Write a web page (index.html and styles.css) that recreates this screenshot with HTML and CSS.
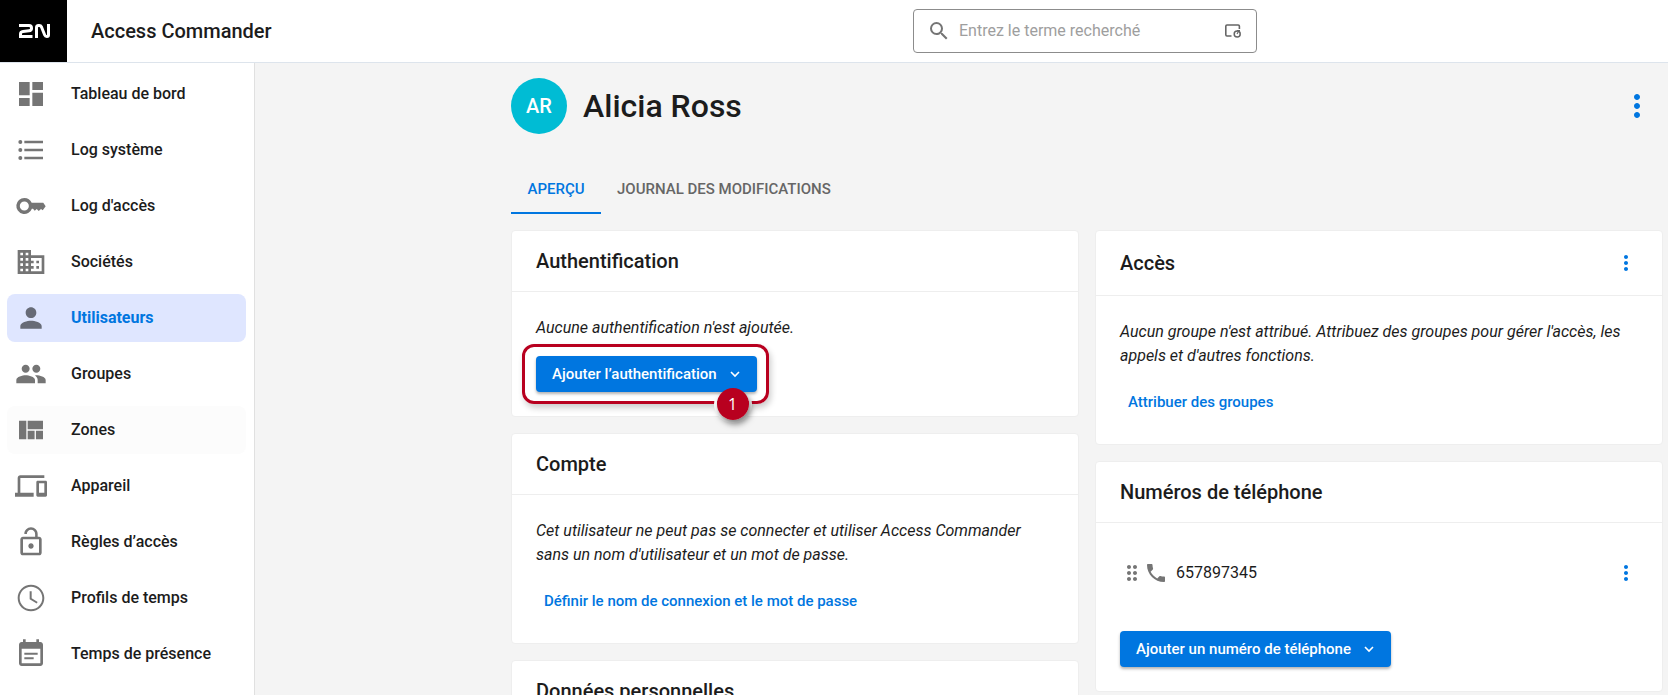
FILE: index.html
```
<!DOCTYPE html>
<html lang="fr">
<head>
    <meta charset="UTF-8">
    <meta name="viewport" content="width=device-width, initial-scale=1.0">
    <title>Access Commander</title>
    <link rel="stylesheet" href="styles.css">
</head>
<body>
    <header class="topbar">
        <a class="logo" href="#" aria-label="2N">
            <svg viewBox="0 0 32 14" width="32" height="14" fill="none" stroke="#fff" stroke-width="3">
                <path d="M1 1.500h10q2.500 0 2.500 2.500v0.500q0 2-2.500 2.300l-6 0.600q-2.500 0.300-2.500 2.500v2.600h12"/>
                <path d="M18.500 14V3.500q0-2 2-2h0.800q1.500 0 2.200 1.500l3.200 8q0.600 1.500 2 1.500h0.300q1.500 0 1.500-1.500V0"/>
            </svg>
        </a>
        <span class="app-name">Access Commander</span>
        <div class="search">
            <svg class="icon" viewBox="0 0 24 24" width="24" height="24"><path d="M15.500 14h-.79l-.28-.27A6.471 6.471 0 0 0 16 9.500 6.500 6.500 0 1 0 9.500 16c1.610 0 3.090-.59 4.230-1.570l.27.28v.79l5 4.990L20.490 19l-4.990-5zm-6 0C7.010 14 5 11.990 5 9.500S7.010 5 9.500 5 14 7.010 14 9.500 11.990 14 9.500 14z"/></svg>
            <input type="search" placeholder="Entrez le terme recherché" aria-label="Recherche">
            <svg viewBox="0 0 18 16" width="18" height="16" fill="none" stroke="#666" stroke-width="1.600">
                <path d="M7.500 13H3Q1.800 13 1.800 11.800V3.200Q1.800 2 3 2H14.200Q15.400 2 15.400 3.200V6"/>
                <circle cx="13.200" cy="11" r="3" stroke-width="1.500"/>
                <path d="M13 11L14.500 8.500M13 7.500h3" stroke-width="1.200"/>
            </svg>
        </div>
    </header>

    <div class="layout">
        <nav class="sidebar">
            <a class="nav-item" href="#">
                <svg class="icon" viewBox="0 0 24 24"><path d="M3 13h8V3H3v10zm0 8h8v-6H3v6zm10 0h8V11h-8v10zm0-18v6h8V3h-8z"/></svg>
                Tableau de bord
            </a>
            <a class="nav-item" href="#">
                <svg class="icon" viewBox="0 0 24 24"><path d="M7 5h14v2H7V5m0 8v-2h14v2H7M4 4.500A1.500 1.500 0 0 1 5.500 6 1.500 1.500 0 0 1 4 7.500 1.500 1.500 0 0 1 2.500 6 1.500 1.500 0 0 1 4 4.500m0 6A1.500 1.500 0 0 1 5.500 12 1.500 1.500 0 0 1 4 13.500 1.500 1.500 0 0 1 2.500 12 1.500 1.500 0 0 1 4 10.500M7 19v-2h14v2H7m-3-2.500A1.500 1.500 0 0 1 5.500 18 1.500 1.500 0 0 1 4 19.500 1.500 1.500 0 0 1 2.500 18 1.500 1.500 0 0 1 4 16.500z"/></svg>
                Log système
            </a>
            <a class="nav-item" href="#">
                <svg class="icon" viewBox="0 0 24 24"><path fill-rule="evenodd" d="M7 6a6 6 0 1 0 5.650 8H13.500l1.300 1.600 1.500-1.400 1.500 1.600 1.700-1.600 1.300 1L23 12.200 21.200 9.600H12.500A6 6 0 0 0 7 6zm0 2.600a3.400 3.400 0 1 1 0 6.800 3.400 3.400 0 0 1 0-6.800z"/></svg>
                Log d'accès
            </a>
            <a class="nav-item" href="#">
                <svg class="icon" viewBox="0 0 24 24"><path d="M12 7V3H2v18h20V7H12zM6 19H4v-2h2v2zm0-4H4v-2h2v2zm0-4H4V9h2v2zm0-4H4V5h2v2zm4 12H8v-2h2v2zm0-4H8v-2h2v2zm0-4H8V9h2v2zm0-4H8V5h2v2zm10 12h-8v-2h2v-2h-2v-2h2v-2h-2V9h8v10zm-2-8h-2v2h2v-2zm0 4h-2v2h2v-2z"/></svg>
                Sociétés
            </a>
            <a class="nav-item active" href="#">
                <svg class="icon" viewBox="0 0 24 24"><path d="M12 12c2.210 0 4-1.790 4-4s-1.790-4-4-4-4 1.790-4 4 1.790 4 4 4zm0 2c-2.670 0-8 1.340-8 4v2h16v-2c0-2.660-5.330-4-8-4z"/></svg>
                Utilisateurs
            </a>
            <a class="nav-item" href="#">
                <svg class="icon" viewBox="0 0 24 24"><path d="M16 11c1.660 0 2.990-1.340 2.990-3S17.660 5 16 5s-3 1.340-3 3 1.340 3 3 3zm-8 0c1.660 0 2.990-1.340 2.990-3S9.660 5 8 5 5 6.340 5 8s1.340 3 3 3zm0 2c-2.330 0-7 1.170-7 3.500V19h14v-2.500c0-2.330-4.670-3.500-7-3.500zm8 0c-.29 0-.62.020-.97.050 1.160.84 1.970 1.970 1.970 3.450V19h6v-2.500c0-2.330-4.670-3.500-7-3.500z"/></svg>
                Groupes
            </a>
            <a class="nav-item hover" href="#">
                <svg class="icon" viewBox="0 0 24 24"><path d="M3 5h5.500v14H3zM9.500 5H21v6.500H9.500zM9.500 12.500h5.200V19H9.500zM15.700 12.500H21V19h-5.300z"/></svg>
                Zones
            </a>
            <a class="nav-item" href="#">
                <svg class="icon" viewBox="0 0 24 24"><path d="M4 6h18V4H4c-1.100 0-2 .9-2 2v11H0v3h14v-3H4V6zm19 2h-6c-.55 0-1 .45-1 1v10c0 .55.45 1 1 1h6c.55 0 1-.45 1-1V9c0-.55-.45-1-1-1zm-1 9h-4v-7h4v7z"/></svg>
                Appareil
            </a>
            <a class="nav-item" href="#">
                <svg class="icon" viewBox="0 0 24 24"><path d="M12 17c1.100 0 2-.9 2-2s-.9-2-2-2-2 .9-2 2 .9 2 2 2zm6-9h-1V6c0-2.760-2.240-5-5-5S7 3.240 7 6h1.900c0-1.710 1.390-3.100 3.100-3.100s3.100 1.390 3.100 3.100v2H6c-1.100 0-2 .9-2 2v10c0 1.100.9 2 2 2h12c1.100 0 2-.9 2-2V10c0-1.100-.9-2-2-2zm0 12H6V10h12v10z"/></svg>
                Règles d’accès
            </a>
            <a class="nav-item" href="#">
                <svg class="icon" viewBox="0 0 24 24"><path d="M11.990 2C6.470 2 2 6.480 2 12s4.470 10 9.990 10C17.520 22 22 17.520 22 12S17.520 2 11.990 2zM12 20.500c-4.700 0-8.500-3.800-8.500-8.500S7.300 3.500 12 3.500s8.500 3.800 8.500 8.500-3.800 8.500-8.500 8.500zM12.500 7H11v6l5.250 3.150.75-1.230-4.500-2.670z"/></svg>
                Profils de temps
            </a>
            <a class="nav-item" href="#">
                <svg class="icon" viewBox="0 0 24 24"><path d="M17 11H7v1.600h10V11zm2-8h-1V1h-2v2H8V1H6v2H5c-1.110 0-1.990.9-1.990 2L3 19c0 1.100.89 2 2 2h14c1.100 0 2-.9 2-2V5c0-1.100-.9-2-2-2zm0 16H5V8h14v11zm-5-4.600H7V16h7v-1.600z"/></svg>
                Temps de présence
            </a>
        </nav>

        <main class="content">
            <div class="profile">
                <span class="avatar">AR</span>
                <h1>Alicia Ross</h1>
                <button class="icon-btn large" aria-label="Plus d'actions">
                    <svg viewBox="0 0 24 24" width="36" height="36"><path d="M12 8c1.100 0 2-.9 2-2s-.9-2-2-2-2 .9-2 2 .9 2 2 2zm0 2c-1.100 0-2 .9-2 2s.9 2 2 2 2-.9 2-2-.9-2-2-2zm0 6c-1.100 0-2 .9-2 2s.9 2 2 2 2-.9 2-2-.9-2-2-2z"/></svg>
                </button>
            </div>

            <div class="tabs">
                <button class="tab selected">APERÇU</button>
                <button class="tab">JOURNAL DES MODIFICATIONS</button>
            </div>

            <div class="columns">
                <div class="column">
                    <section class="card">
                        <div class="card-header"><h2>Authentification</h2></div>
                        <div class="card-body">
                            <p class="empty">Aucune authentification n'est ajoutée.</p>
                            <div class="callout">
                                <button class="btn">
                                    Ajouter l’authentification
                                    <svg class="chevron" viewBox="0 0 20 20"><path d="M6 8l4 4 4-4"/></svg>
                                </button>
                                <span class="callout-frame"></span>
                                <span class="callout-number">1</span>
                            </div>
                        </div>
                    </section>

                    <section class="card">
                        <div class="card-header"><h2>Compte</h2></div>
                        <div class="card-body">
                            <p class="empty">Cet utilisateur ne peut pas se connecter et utiliser Access Commander sans un nom d'utilisateur et un mot de passe.</p>
                            <button class="btn-text">Définir le nom de connexion et le mot de passe</button>
                        </div>
                    </section>

                    <section class="card">
                        <div class="card-header"><h2>Données personnelles</h2></div>
                    </section>
                </div>

                <div class="column">
                    <section class="card">
                        <div class="card-header with-menu">
                            <h2>Accès</h2>
                            <button class="icon-btn" aria-label="Menu Accès">
                                <svg viewBox="0 0 24 24" width="24" height="24"><path d="M12 8c1.100 0 2-.9 2-2s-.9-2-2-2-2 .9-2 2 .9 2 2 2zm0 2c-1.100 0-2 .9-2 2s.9 2 2 2 2-.9 2-2-.9-2-2-2zm0 6c-1.100 0-2 .9-2 2s.9 2 2 2 2-.9 2-2-.9-2-2-2z"/></svg>
                            </button>
                        </div>
                        <div class="card-body">
                            <p class="empty">Aucun groupe n'est attribué. Attribuez des groupes pour gérer l'accès, les appels et d'autres fonctions.</p>
                            <button class="btn-text">Attribuer des groupes</button>
                        </div>
                    </section>

                    <section class="card">
                        <div class="card-header"><h2>Numéros de téléphone</h2></div>
                        <div class="card-body phones">
                            <div class="phone-row">
                                <svg class="icon" viewBox="0 0 24 24" width="24" height="24"><path d="M11 18c0 1.100-.9 2-2 2s-2-.9-2-2 .9-2 2-2 2 .9 2 2zm-2-8c-1.100 0-2 .9-2 2s.9 2 2 2 2-.9 2-2-.9-2-2-2zm0-6c-1.100 0-2 .9-2 2s.9 2 2 2 2-.9 2-2-.9-2-2-2zm6 4c1.100 0 2-.9 2-2s-.9-2-2-2-2 .9-2 2 .9 2 2 2zm0 2c-1.100 0-2 .9-2 2s.9 2 2 2 2-.9 2-2-.9-2-2-2zm0 6c-1.100 0-2 .9-2 2s.9 2 2 2 2-.9 2-2-.9-2-2-2z"/></svg>
                                <svg class="icon" viewBox="0 0 24 24" width="24" height="24"><path d="M6.620 10.790c1.440 2.830 3.760 5.140 6.590 6.590l2.200-2.200c.27-.27.67-.36 1.020-.24 1.120.37 2.330.57 3.570.57.55 0 1 .45 1 1V20c0 .55-.45 1-1 1-9.390 0-17-7.610-17-17 0-.55.45-1 1-1h3.500c.55 0 1 .45 1 1 0 1.250.2 2.450.57 3.570.11.35.03.74-.25 1.020l-2.200 2.200z"/></svg>
                                <span class="phone-number">657897345</span>
                                <button class="icon-btn" aria-label="Menu numéro">
                                    <svg viewBox="0 0 24 24" width="24" height="24"><path d="M12 8c1.100 0 2-.9 2-2s-.9-2-2-2-2 .9-2 2 .9 2 2 2zm0 2c-1.100 0-2 .9-2 2s.9 2 2 2 2-.9 2-2-.9-2-2-2zm0 6c-1.100 0-2 .9-2 2s.9 2 2 2 2-.9 2-2-.9-2-2-2z"/></svg>
                                </button>
                            </div>
                            <button class="btn">
                                Ajouter un numéro de téléphone
                                <svg class="chevron" viewBox="0 0 20 20"><path d="M6 8l4 4 4-4"/></svg>
                            </button>
                        </div>
                    </section>
                </div>
            </div>
        </main>
    </div>
</body>
</html>
```
FILE: styles.css
```
* {
    box-sizing: border-box;
}

body {
    margin: 0;
    height: 100vh;
    display: flex;
    flex-direction: column;
    overflow: hidden;
    background-color: #f4f4f4;
    color: #1c1c1c;
    font-family: Roboto, "Liberation Sans", sans-serif;
    font-size: 16px;
    line-height: 24px;
}

h1, h2, p {
    margin: 0;
    font-weight: 500;
}

button {
    font-family: inherit;
    border: none;
    background: none;
    padding: 0;
    cursor: pointer;
}

svg {
    display: block;
    flex-shrink: 0;
}

.icon {
    fill: #757575;
}

/* Top bar */
.topbar {
    flex-shrink: 0;
    display: flex;
    align-items: center;
    background-color: #fff;
    border-bottom: 1px solid #dde4ec;
}

.logo {
    width: 67px;
    height: 62px;
    display: flex;
    align-items: center;
    justify-content: center;
    background-color: #000;
}

.app-name {
    flex: 1;
    padding-left: 24px;
    font-size: 20px;
    font-weight: 500;
}

.search {
    display: flex;
    align-items: center;
    width: 344px;
    height: 44px;
    margin-right: 411px;
    padding: 0 14px 0 13px;
    border: 1px solid #8c8c8c;
    border-radius: 4px;
}

.search input {
    flex: 1;
    min-width: 0;
    padding: 0 8px;
    border: none;
    outline: none;
    background: none;
    font: inherit;
}

.search input::placeholder {
    color: #9e9e9e;
}

.layout {
    flex: 1;
    min-height: 0;
    display: flex;
}

/* Sidebar */
.sidebar {
    flex-shrink: 0;
    width: 255px;
    display: flex;
    flex-direction: column;
    gap: 8px;
    padding: 7px 8px 0 7px;
    background-color: #fff;
    border-right: 1px solid #e0e0e0;
}

.nav-item {
    flex-shrink: 0;
    display: flex;
    align-items: center;
    gap: 24px;
    height: 48px;
    padding-left: 8px;
    border-radius: 8px;
    color: #1c1c1c;
    font-weight: 500;
    text-decoration: none;
}

.nav-item .icon {
    width: 32px;
    height: 32px;
}

.nav-item.hover {
    background-color: #fcfcfc;
}

.nav-item.active {
    background-color: #dfe6ff;
    color: #0076e0;
    font-weight: 700;
}

.nav-item.active .icon {
    fill: #676b77;
}

/* Main content */
.content {
    flex: 1;
    min-width: 0;
    padding: 15px 5px 0 256px;
}

.profile {
    display: flex;
    align-items: center;
    gap: 16px;
}

.profile h1 {
    flex: 1;
    font-size: 32px;
    line-height: 40px;
}

.avatar {
    display: flex;
    align-items: center;
    justify-content: center;
    width: 56px;
    height: 56px;
    border-radius: 50%;
    background-color: #00bcd4;
    color: #fff;
    font-size: 20px;
    font-weight: 500;
}

.icon-btn {
    display: flex;
    align-items: center;
    justify-content: center;
    width: 40px;
    height: 40px;
    fill: #0076e0;
}

.icon-btn.large {
    width: 52px;
    height: 52px;
}

.tabs {
    display: flex;
    margin: 32px 0 16px;
}

.tab {
    min-width: 90px;
    height: 48px;
    padding: 0 16px;
    border-bottom: 2px solid transparent;
    color: #666;
    font-size: 15px;
    font-weight: 500;
}

.tab.selected {
    border-color: #0076e0;
    color: #0076e0;
}

.columns {
    display: grid;
    grid-template-columns: 1fr 1fr;
    gap: 16px;
}

.column {
    display: flex;
    flex-direction: column;
    gap: 16px;
}

/* Cards */
.card {
    background-color: #fff;
    border: 1px solid #eee;
    border-radius: 4px;
}

.card-header {
    display: flex;
    align-items: center;
    justify-content: space-between;
    padding: 18px 24px;
    border-bottom: 1px solid #eee;
}

.card-header.with-menu {
    padding: 12px 16px 12px 24px;
}

.card-header h2 {
    font-size: 20px;
    line-height: 24px;
}

.card-body {
    display: flex;
    flex-direction: column;
    align-items: flex-start;
    gap: 16px;
    padding: 24px;
}

.card-body.phones {
    gap: 32px;
}

.empty {
    font-style: italic;
    font-weight: 400;
}

.btn {
    display: flex;
    align-items: center;
    gap: 8px;
    height: 36px;
    padding: 0 12px 0 16px;
    border-radius: 4px;
    background-color: #0076e0;
    box-shadow: 0 2px 3px rgba(0, 0, 0, 0.3);
    color: #fff;
    font-size: 15px;
    font-weight: 500;
}

.chevron {
    width: 20px;
    height: 20px;
    fill: none;
    stroke: #fff;
    stroke-width: 1.6;
}

.btn-text {
    height: 36px;
    padding: 0 8px;
    color: #0076e0;
    font-size: 15px;
    font-weight: 500;
}

.phone-row {
    align-self: stretch;
    display: flex;
    align-items: center;
    height: 52px;
    margin-right: -8px;
}

.phone-number {
    flex: 1;
    padding-left: 8px;
}

/* Numbered callout drawn round the button */
.callout {
    position: relative;
    isolation: isolate;
}

.callout-frame {
    position: absolute;
    inset: -12px -12px -12px -14px;
    z-index: -2;
    border: 3px solid #b8001f;
    border-radius: 12px;
    box-shadow: 2px 4px 6px rgba(0, 0, 0, 0.2);
}

.callout-number {
    position: absolute;
    right: 8px;
    bottom: -28px;
    width: 32px;
    height: 32px;
    border-radius: 50%;
    background-color: #b8001f;
    color: #fff;
    font-family: "Open Sans", sans-serif;
    line-height: 32px;
    text-align: center;
}

/* white ring stays under the button, over the frame */
.callout-number::before {
    content: "";
    position: absolute;
    inset: 0;
    z-index: -1;
    border-radius: 50%;
    box-shadow: 2px 4px 6px rgba(0, 0, 0, 0.5), 0 0 0 3px #fff;
}
```
